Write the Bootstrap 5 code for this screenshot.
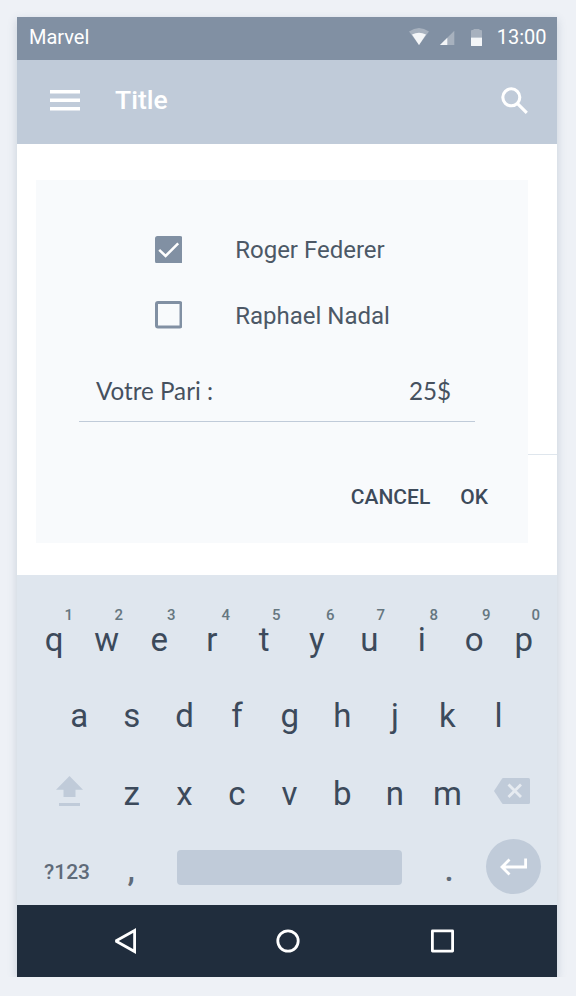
<!DOCTYPE html>
<html lang="fr">
<head>
<meta charset="utf-8">
<meta name="viewport" content="width=device-width, initial-scale=1">
<title>Votre Pari</title>
<link rel="stylesheet" href="https://cdn.jsdelivr.net/npm/bootstrap@5.3.0/dist/css/bootstrap.min.css">
<style>
  body { background: #eef1f6; font-family: Roboto, sans-serif; padding: 17px 19px 0 17px; overflow: hidden; }
  svg { display: block; flex: none; }
  .phone { height: 960px; background: #fff; box-shadow: 0 3px 9px rgba(70, 90, 125, .22); }
  .status { height: 43px; background: #8190a3; font-size: 20px; line-height: 30px; padding: 0 10.5px 3px 12px; }
  .appbar { height: 84px; background: #c0cbd9; padding: 0 29px 3.5px 33px; }
  .appbar h1 { font-size: 26.5px; font-weight: 500; margin-left: 35px; line-height: 30px; }
  .content { height: 431px; padding: 36.4px 0 0 19.4px; }
  .dialog-panel { width: 491.6px; height: 362.6px; background: #f8fafc; color: #4c5866; padding: 36.6px 40px 0 42.6px; }
  .choice { height: 65.5px; padding-left: 76px; font-size: 24px; line-height: 36px; gap: 52.7px; }
  .choice + .choice span { padding-top: 2px; }
  .choice svg { width: 27.5px; height: 27.5px; }
  .amount { font: 24.2px/30px Lato, sans-serif; color: #46515f; padding: 28px 24px 15.5px 17px; border-bottom: 1px solid #c0cbd9; margin-right: 13px; }
  .actions { margin-top: 59.5px; gap: 30px; }
  .actions button { font-size: 21px; font-weight: 500; line-height: 30px; color: #3d4a5a; }
  .side-rule { height: 1px; background: #dfe6ed; margin-top: 273.6px; }
  .keyboard { height: 330px; background: #dfe6ee; color: #3c4a5b; padding: 33.2px 0 0 11px; }
  .key { width: 52.6px; flex: none; text-align: center; font-size: 33px; line-height: 35px; }
  .keys-top .key { width: 52.5px; }
  .hint { display: block; font-size: 15px; line-height: 14px; font-weight: 500; color: #667780; padding-left: 24px; }
  .key:nth-child(1) .hint { padding-left: 29px; }
  .key:nth-child(4) .hint { padding-left: 28px; }
  .key:nth-child(6) .hint { padding-left: 27px; }
  .key:nth-child(7) .hint { padding-left: 23px; }
  .keys-top .key:last-child { margin-left: -3px; }
  .keys-home { margin-top: 40.8px; padding-left: 25px; }
  .keys-home .key:last-child { margin-left: -1.5px; }
  .keys-bottom { margin-top: 43.2px; height: 35px; padding-left: 28px; }
  .keys-bottom .shift { margin-right: 22.5px; }
  .keys-bottom .erase { margin-left: 20.5px; margin-top: 1.8px; }
  .keys-space { margin-top: 27.8px; height: 55.5px; padding-left: 16px; color: #5f6b79; }
  .mode { font-size: 21px; font-weight: 500; line-height: 24px; padding-top: 11px; width: 61px; }
  .punct { padding-top: 6px; font-weight: 500; }
  .spacebar { width: 225px; height: 35px; border-radius: 4px; background: #c0cbd9; margin: 2px 20.4px 0 19.8px; }
  .enter { width: 55.5px; height: 55.5px; background: #c0cbd9; margin-left: 10.6px; }
  .sysnav { height: 72px; background: #202d3d; }
</style>
<script src="https://cdn.jsdelivr.net/npm/bootstrap@5.3.0/dist/js/bootstrap.bundle.min.js"></script>
</head>
<body>
<main class="phone">
  <div class="status d-flex align-items-center text-white">
    <span class="me-auto">Marvel</span>
    <svg width="88" height="20" viewBox="0 0 88 20">
      <g fill="#fff" fill-opacity=".3">
        <path d="M0 4.5Q10-2.5 20 4.5L10 18z"/>
        <path d="M45.3 3.7V18H31z"/>
        <path d="M62 10.500V4Q62 3 63 3H64.5V2H70.500V3H72Q73 3 73 4V10.500z"/>
      </g>
      <g fill="#f4f6f8">
        <path d="M3 7.500Q10 4 17 7.500L10 18z"/>
        <path d="M38.3 10.700V18H31z"/>
        <path d="M62 10.500h11v8q0 .5-.5.500h-10q-.5 0-.5-.5z"/>
      </g>
    </svg>
    <span>13:00</span>
  </div>
  <header class="appbar d-flex align-items-center text-white">
    <svg width="30" height="21" viewBox="0 0 30 21" fill="#fff"><path d="M0 0h30v3.500H0zM0 8.500h30v3.500H0zM0 17h30v3.500H0z"/></svg>
    <h1 class="mb-0 me-auto">Title</h1>
    <svg width="27" height="27" viewBox="0 0 27 27" fill="none" stroke="#fff" stroke-width="3.1"><circle cx="10.3" cy="10.3" r="8.5"/><path d="M16.3 16.3L25.8 25.8"/></svg>
  </header>
  <section class="content d-flex align-items-start">
    <div class="dialog-panel">
      <div class="choice d-flex align-items-center">
        <svg viewBox="0 0 27.5 27.5"><rect width="27.5" height="27.5" rx="2.5" fill="#8190a3"/><path d="M4.2 13.8L10.6 20L23.2 7.3" fill="none" stroke="#fff" stroke-width="2.5"/></svg>
        <span>Roger Federer</span>
      </div>
      <div class="choice d-flex align-items-center">
        <svg viewBox="0 0 27.5 27.5"><rect x="1.5" y="1.5" width="24.5" height="24.5" rx="1.5" fill="none" stroke="#8190a3" stroke-width="3"/></svg>
        <span>Raphael Nadal</span>
      </div>
      <div class="amount d-flex justify-content-between"><span>Votre Pari :</span><span>25$</span></div>
      <div class="actions d-flex justify-content-end">
        <button type="button" class="btn p-0 border-0">CANCEL</button>
        <button type="button" class="btn p-0 border-0">OK</button>
      </div>
    </div>
    <div class="side-rule flex-grow-1"></div>
  </section>
  <section class="keyboard">
    <div class="keys-top d-flex">
      <div class="key"><span class="hint">1</span>q</div>
      <div class="key"><span class="hint">2</span>w</div>
      <div class="key"><span class="hint">3</span>e</div>
      <div class="key"><span class="hint">4</span>r</div>
      <div class="key"><span class="hint">5</span>t</div>
      <div class="key"><span class="hint">6</span>y</div>
      <div class="key"><span class="hint">7</span>u</div>
      <div class="key"><span class="hint">8</span>i</div>
      <div class="key"><span class="hint">9</span>o</div>
      <div class="key"><span class="hint">0</span>p</div>
    </div>
    <div class="keys-home d-flex">
      <div class="key">a</div><div class="key">s</div><div class="key">d</div><div class="key">f</div><div class="key">g</div><div class="key">h</div><div class="key">j</div><div class="key">k</div><div class="key">l</div>
    </div>
    <div class="keys-bottom d-flex">
      <svg class="shift" width="27" height="30" viewBox="0 0 27 30" fill="#c0cbd9"><path d="M13.5 0L27 13.7H19.5V21H7.5V13.7H0zM3 27h21v3H3z"/></svg>
      <div class="key">z</div><div class="key">x</div><div class="key">c</div><div class="key">v</div><div class="key">b</div><div class="key">n</div><div class="key">m</div>
      <svg class="erase" width="36" height="26" viewBox="0 0 36 26"><path d="M9 0H34.5Q36 0 36 1.5V24.5Q36 26 34.5 26H9Q8.5 26 8 25.3L0 13L8 .7Q8.5 0 9 0z" fill="#c0cbd9"/><path d="M14.5 6.5l12.5 12.5M27 6.5L14.5 19" stroke="#e6ebf1" stroke-width="2.8"/></svg>
    </div>
    <div class="keys-space d-flex align-items-center">
      <span class="mode">?123</span>
      <div class="key punct">,</div>
      <div class="spacebar"></div>
      <div class="key punct">.</div>
      <div class="enter rounded-circle d-flex align-items-center justify-content-center">
        <svg width="28" height="18" viewBox="0 0 28 18" fill="none" stroke="#fff" stroke-width="2.8"><path d="M25.6 .5V9H2M9.5 1.5L2 9L9.5 16.5"/></svg>
      </div>
    </div>
  </section>
  <nav class="sysnav d-flex align-items-center justify-content-center">
    <svg width="346" height="26" viewBox="0 0 346 26" fill="none" stroke="#fff" stroke-width="2.8">
      <path d="M20.600 2.500L1.800 13L20.600 23.500z" stroke-linejoin="miter" stroke-miterlimit="2"/>
      <circle cx="174" cy="13" r="10.2"/>
      <rect x="318.4" y="2.9" width="20.2" height="20.2" stroke-linejoin="round"/>
    </svg>
  </nav>
</main>
</body>
</html>
